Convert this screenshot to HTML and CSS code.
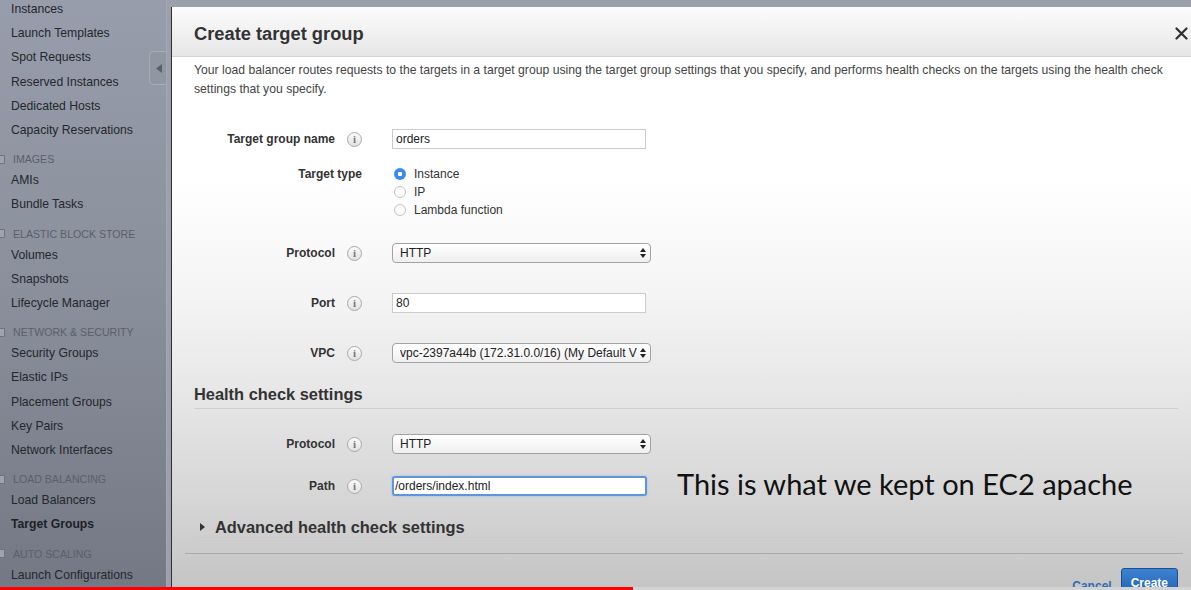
FILE: index.html
```html
<!DOCTYPE html>
<html lang="en">
<head>
<meta charset="utf-8">
<title>Create target group</title>
<link rel="stylesheet" href="styles.css">
</head>
<body>
<div class="screen">
  <aside class="sidebar">
    <ul class="nav">
      <li class="item">Instances</li>
      <li class="item">Launch Templates</li>
      <li class="item">Spot Requests</li>
      <li class="item">Reserved Instances</li>
      <li class="item">Dedicated Hosts</li>
      <li class="item">Capacity Reservations</li>
      <li class="group"><span class="toggle"></span>IMAGES</li>
      <li class="item">AMIs</li>
      <li class="item">Bundle Tasks</li>
      <li class="group"><span class="toggle"></span>ELASTIC BLOCK STORE</li>
      <li class="item">Volumes</li>
      <li class="item">Snapshots</li>
      <li class="item">Lifecycle Manager</li>
      <li class="group"><span class="toggle"></span>NETWORK &amp; SECURITY</li>
      <li class="item">Security Groups</li>
      <li class="item">Elastic IPs</li>
      <li class="item">Placement Groups</li>
      <li class="item">Key Pairs</li>
      <li class="item">Network Interfaces</li>
      <li class="group"><span class="toggle"></span>LOAD BALANCING</li>
      <li class="item">Load Balancers</li>
      <li class="item active">Target Groups</li>
      <li class="group"><span class="toggle"></span>AUTO SCALING</li>
      <li class="item">Launch Configurations</li>
    </ul>
    <div class="collapse-tab">
      <svg width="6" height="9" viewBox="0 0 6 9"><path d="M6 0 L0 4.5 L6 9 Z" fill="#5a5f6b"/></svg>
    </div>
  </aside>

  <div class="stage">
    <section class="modal">
      <header class="modal-head">
        <h1 class="modal-title">Create target group</h1>
        <svg class="close" width="13" height="13" viewBox="0 0 13 13"><path d="M1.5 1.5 L11.5 11.5 M11.5 1.5 L1.5 11.5" stroke="#2f2f2f" stroke-width="2.2" stroke-linecap="round"/></svg>
      </header>

      <div class="modal-body">
        <p class="desc">Your load balancer routes requests to the targets in a target group using the target group settings that you specify, and performs health checks on the targets using the health check settings that you specify.</p>

        <div class="row row-name">
          <div class="label-cell"><span class="label">Target group name</span><span class="info">i</span></div>
          <div class="input">orders</div>
        </div>

        <div class="row row-type">
          <div class="label-cell"><span class="label">Target type</span></div>
          <ul class="radios">
            <li class="radio-item"><span class="radio checked"></span>Instance</li>
            <li class="radio-item"><span class="radio"></span>IP</li>
            <li class="radio-item"><span class="radio"></span>Lambda function</li>
          </ul>
        </div>

        <div class="row row-protocol">
          <div class="label-cell"><span class="label">Protocol</span><span class="info">i</span></div>
          <div class="select"><span class="select-text">HTTP</span><svg class="arrows" width="6" height="10" viewBox="0 0 6 10"><path d="M3 0 L6 4 L0 4 Z M3 10 L6 6 L0 6 Z" fill="#222"/></svg></div>
        </div>

        <div class="row row-port">
          <div class="label-cell"><span class="label">Port</span><span class="info">i</span></div>
          <div class="input">80</div>
        </div>

        <div class="row row-vpc">
          <div class="label-cell"><span class="label">VPC</span><span class="info">i</span></div>
          <div class="select"><span class="select-text">vpc-2397a44b (172.31.0.0/16) (My Default V</span><svg class="arrows" width="6" height="10" viewBox="0 0 6 10"><path d="M3 0 L6 4 L0 4 Z M3 10 L6 6 L0 6 Z" fill="#222"/></svg></div>
        </div>

        <h2 class="section-title">Health check settings</h2>

        <div class="row row-hc-protocol">
          <div class="label-cell"><span class="label">Protocol</span><span class="info">i</span></div>
          <div class="select"><span class="select-text">HTTP</span><svg class="arrows" width="6" height="10" viewBox="0 0 6 10"><path d="M3 0 L6 4 L0 4 Z M3 10 L6 6 L0 6 Z" fill="#222"/></svg></div>
        </div>

        <div class="row row-path">
          <div class="label-cell"><span class="label">Path</span><span class="info">i</span></div>
          <div class="input focused">/orders/index.html</div>
          <span class="annotation">This is what we kept on EC2 apache</span>
        </div>

        <div class="advanced">
          <svg class="caret" width="5" height="8" viewBox="0 0 5 8"><path d="M0 0 L5 4 L0 8 Z" fill="#333"/></svg>
          <span>Advanced health check settings</span>
        </div>
      </div>

      <footer class="modal-foot">
        <span class="cancel">Cancel</span>
        <span class="create">Create</span>
      </footer>
    </section>
  </div>
</div>
<div class="progress"><div class="progress-played"></div></div>
</body>
</html>
```

FILE: styles.css
```css
html, body {
  margin: 0;
  padding: 0;
}

body {
  width: 1191px;
  height: 590px;
  overflow: hidden;
  position: relative;
  font-family: "Liberation Sans", Arial, sans-serif;
  color: #333;
}

.screen {
  display: flex;
  height: 590px;
  background: linear-gradient(to bottom, #989dab 0%, #8a8f9c 50%, #737884 100%);
}

/* ---------- sidebar ---------- */
.sidebar {
  position: relative;
  flex: none;
  width: 166px;
  border-right: 1px solid #a3a8b4;
  overflow: hidden;
}

.nav {
  list-style: none;
  margin: -3px 0 0 0;
  padding: 0 0 0 11px;
}

.item {
  font-size: 12.2px;
  line-height: 24.2px;
  color: #24272d;
  white-space: nowrap;
}

.item.active {
  font-weight: bold;
  color: #1e2126;
}

.group {
  display: flex;
  align-items: center;
  padding-top: 8px;
  font-size: 10.6px;
  line-height: 18px;
  color: #5a5f6b;
  white-space: nowrap;
}

.toggle {
  flex: none;
  width: 7px;
  height: 7px;
  margin-left: -15px;
  margin-right: 8px;
  border: 1px solid #6d727d;
  border-radius: 1px;
  background: #9ea3ae;
}

.collapse-tab {
  position: absolute;
  left: 149px;
  top: 51px;
  width: 18px;
  height: 34px;
  box-sizing: border-box;
  border: 1px solid #a6abb7;
  border-right: none;
  border-radius: 5px 0 0 5px;
  background: #9196a3;
  display: flex;
  align-items: center;
  justify-content: center;
}

/* ---------- modal ---------- */
.stage {
  flex: 1;
  display: flex;
  padding-top: 7px;
  padding-left: 4px;
  background: #9ca0ab;
}

.modal {
  flex: 1;
  display: flex;
  flex-direction: column;
  overflow: hidden;
  border-left: 1px solid #2e2e2e;
  background: linear-gradient(to bottom, #ffffff 0px, #ffffff 170px, #f4f4f4 290px, #e6e6e6 390px, #d6d6d6 490px, #c4c4c4 583px);
}

.modal-head {
  flex: none;
  height: 50px;
  box-sizing: border-box;
  display: flex;
  align-items: center;
  justify-content: space-between;
  padding: 4px 3px 0 22px;
  background: linear-gradient(to bottom, #fcfcfc, #e6e6e6);
  border-bottom: 1px solid #d2d2d2;
}

.modal-title {
  margin: 0;
  font-size: 18.3px;
  font-weight: bold;
  color: #333;
}

.modal-body {
  flex: none;
  padding: 4px 13px 0 22px;
}

.desc {
  margin: 0;
  font-size: 12.2px;
  line-height: 19px;
  color: #444;
}

.row {
  display: flex;
  align-items: center;
  height: 20px;
}

.row-name { margin-top: 30px; }
.row-type { margin-top: 16px; height: auto; align-items: flex-start; }
.row-protocol { margin-top: 24px; }
.row-port { margin-top: 30px; }
.row-vpc { margin-top: 30px; }
.row-hc-protocol { margin-top: 25px; }
.row-path { margin-top: 22px; }

.label-cell {
  flex: none;
  width: 168px;
  margin-right: 30px;
  display: flex;
  justify-content: flex-end;
  align-items: center;
  gap: 12px;
}

.label {
  font-size: 12px;
  font-weight: bold;
  line-height: 18px;
  color: #333;
}

.info {
  width: 15px;
  height: 15px;
  box-sizing: border-box;
  border: 1px solid #a9a9a9;
  border-radius: 50%;
  background: linear-gradient(to bottom, #fbfbfb, #e2e2e2);
  font-family: "Liberation Serif", serif;
  font-size: 11px;
  font-weight: bold;
  line-height: 13px;
  text-align: center;
  color: #777;
}

.input {
  flex: none;
  width: 254px;
  height: 20px;
  box-sizing: border-box;
  border: 1px solid #cbcbcb;
  background: #fff;
  padding-left: 3px;
  font-size: 12px;
  line-height: 18px;
  color: #222;
}

.input.focused {
  width: 255px;
  border: 2px solid #5f95da;
  border-radius: 3px;
  padding-left: 1px;
  line-height: 16px;
  box-shadow: 0 0 2px #8fb6ea;
}

.select {
  flex: none;
  width: 259px;
  height: 20px;
  box-sizing: border-box;
  border: 1px solid #a3a3a3;
  border-radius: 4px;
  background: linear-gradient(to bottom, #ffffff, #efefef);
  display: flex;
  align-items: center;
  padding: 0 4px 0 7px;
  gap: 3px;
}

.select-text {
  flex: 1;
  overflow: hidden;
  white-space: nowrap;
  font-size: 12px;
  color: #222;
}

.arrows {
  flex: none;
}

.radios {
  list-style: none;
  margin: 0;
  padding: 0;
}

.radio-item {
  display: flex;
  align-items: center;
  height: 18px;
  font-size: 12px;
  color: #333;
}

.radio {
  width: 12px;
  height: 12px;
  box-sizing: border-box;
  margin: 0 8px 0 2px;
  border: 1px solid #c2c2c2;
  border-radius: 50%;
  background: #fff;
}

.radio.checked {
  border: none;
  background: radial-gradient(circle, #fff 0 2px, #3b8bef 2.5px);
}

.annotation {
  margin: 0 0 6px 30px;
  font-family: Lato, sans-serif;
  font-size: 29px;
  color: #111;
  white-space: nowrap;
}

.section-title {
  margin: 21px 0 0 0;
  padding-bottom: 4px;
  border-bottom: 1px solid #cfcfcf;
  font-size: 16.4px;
  line-height: 20px;
  font-weight: bold;
  color: #333;
}

.advanced {
  margin-top: 21px;
  display: flex;
  align-items: center;
  height: 20px;
  border-bottom: 1px solid #cbcbcb;
  font-size: 16.4px;
  font-weight: bold;
  color: #333;
}

.caret {
  margin: 0 10px 0 6px;
}

.modal-foot {
  flex: none;
  margin: 15px 8px 0 13px;
  border-top: 1px solid #a8a8a8;
  padding: 14px 5px 0 0;
  display: flex;
  justify-content: flex-end;
  align-items: flex-start;
  gap: 9px;
}

.cancel {
  margin-top: 11px;
  font-size: 12px;
  font-weight: bold;
  color: #2f6db3;
}

.create {
  height: 30px;
  padding: 0 9px;
  box-sizing: border-box;
  border: 1px solid #1b4f91;
  border-radius: 3px;
  background: linear-gradient(to bottom, #3d82d2, #1f5fae);
  color: #fff;
  font-size: 12px;
  font-weight: bold;
  line-height: 28px;
}

/* ---------- video progress overlay ---------- */
.progress {
  position: absolute;
  left: 0;
  bottom: 0;
  width: 100%;
  height: 3px;
  background: #d2d2d2;
}

.progress-played {
  width: 633px;
  height: 3px;
  background: #ff0000;
}
```
